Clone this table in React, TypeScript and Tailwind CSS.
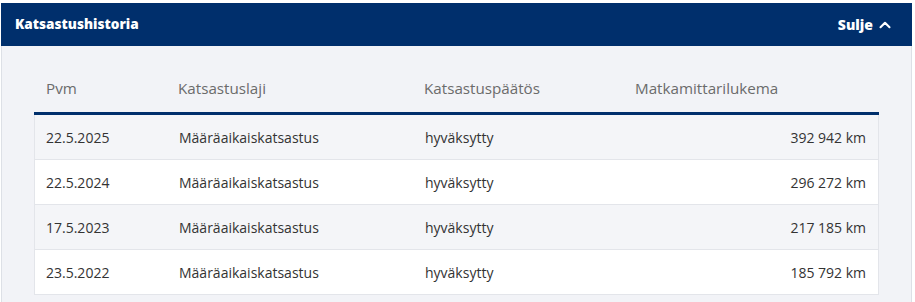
import { ChevronUp } from "lucide-react";

type Inspection = {
  date: string;
  kind: string;
  result: string;
  odometer: string;
};

const INSPECTIONS: Inspection[] = [
  { date: "22.5.2025", kind: "Määräaikaiskatsastus", result: "hyväksytty", odometer: "392 942 km" },
  { date: "22.5.2024", kind: "Määräaikaiskatsastus", result: "hyväksytty", odometer: "296 272 km" },
  { date: "17.5.2023", kind: "Määräaikaiskatsastus", result: "hyväksytty", odometer: "217 185 km" },
  { date: "23.5.2022", kind: "Määräaikaiskatsastus", result: "hyväksytty", odometer: "185 792 km" },
];

const COLS = "grid grid-cols-[132px_246px_211px_1fr]";

export default function App() {
  return (
    <div className="h-[302px] w-[915px] overflow-hidden bg-white pl-px pt-[3px] font-['Open_Sans',sans-serif]">
      <div className="w-[911px]">
        <div className="flex h-[43px] items-center justify-between bg-[#002f6c] pl-[14px] pr-[18px] text-white">
          <h2 className="text-[13.6px] font-extrabold">Katsastushistoria</h2>
          <button className="flex items-center gap-[3px] text-[14px] font-extrabold">
            Sulje
            <ChevronUp className="h-[18px] w-[18px]" strokeWidth={2.75} />
          </button>
        </div>

        <div className="h-[260px] border-x border-[#dde0e6] bg-[#f2f3f7] px-[32px] pt-[18px]">
          <div className={`${COLS} h-[48px] items-center text-[15.2px] text-[#6b6b6b]`}>
            <div className="pl-3">Pvm</div>
            <div className="pl-3">Katsastuslaji</div>
            <div className="pl-3">Katsastuspäätös</div>
            <div className="pl-3">Matkamittarilukema</div>
          </div>
          <div className="border-t-[3px] border-[#002f6c]">
            {INSPECTIONS.map((row, i) => (
              <div
                key={row.date}
                className={`${COLS} h-[45px] items-center border-x border-b border-[#e3e5ea] text-[14px] text-[#333333] ${
                  i % 2 === 0 ? "bg-[#f4f5f8]" : "bg-white"
                }`}
              >
                <div className="pl-[11px]">{row.date}</div>
                <div className="pl-3">{row.kind}</div>
                <div className="pl-3">{row.result}</div>
                <div className="pr-3 text-right">{row.odometer}</div>
              </div>
            ))}
          </div>
        </div>
      </div>
    </div>
  );
}
